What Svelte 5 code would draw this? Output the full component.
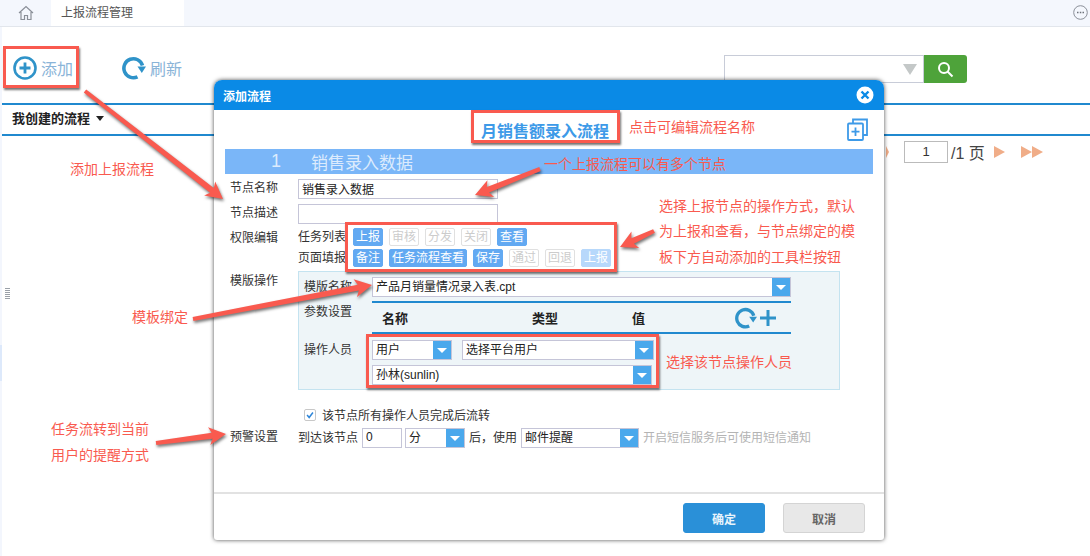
<script>
  const taskButtons = [
    { label: '上报', on: true },
    { label: '审核' },
    { label: '分发' },
    { label: '关闭' },
    { label: '查看', on: true }
  ];
  const pageButtons = [
    { label: '备注', on: true },
    { label: '任务流程查看', on: true },
    { label: '保存', on: true },
    { label: '通过' },
    { label: '回退' },
    { label: '上报', faint: true }
  ];

  // callouts drawn over the screenshot
  const notes = [
    { text: '添加上报流程', x: 70, y: 159 },
    { text: '点击可编辑流程名称', x: 629, y: 117 },
    { text: '一个上报流程可以有多个节点', x: 544, y: 154 },
    { text: '选择上报节点的操作方式，默认', x: 659, y: 196 },
    { text: '为上报和查看，与节点绑定的模', x: 659, y: 221 },
    { text: '板下方自动添加的工具栏按钮', x: 659, y: 247 },
    { text: '模板绑定', x: 132, y: 307 },
    { text: '选择该节点操作人员', x: 666, y: 352 },
    { text: '任务流转到当前', x: 51, y: 419 },
    { text: '用户的提醒方式', x: 51, y: 445 }
  ];
  const boxes = [
    { x: 3, y: 46, w: 76, h: 42 },
    { x: 471, y: 110, w: 149, h: 33 },
    { x: 345, y: 222, w: 272, h: 50 },
    { x: 366, y: 334, w: 293, h: 54 }
  ];
  const arrows = [
    [85, 91, 223, 199],
    [540, 169, 475, 195],
    [654, 231, 620, 247],
    [193, 319, 372, 285],
    [156, 443, 226, 434]
  ];

  function arrowPoints([x1, y1, x2, y2]) {
    const len = Math.hypot(x2 - x1, y2 - y1);
    const ux = (x2 - x1) / len;
    const uy = (y2 - y1) / len;
    const at = (along, side) =>
      `${(x2 - ux * along - uy * side).toFixed(1)},${(y2 - uy * along + ux * side).toFixed(1)}`;
    const tail = `${(x1 - uy * 2).toFixed(1)},${(y1 + ux * 2).toFixed(1)}`;
    const tail2 = `${(x1 + uy * 2).toFixed(1)},${(y1 - ux * 2).toFixed(1)}`;
    return [tail, at(14, 3), at(17, 9), at(0, 0), at(17, -9), at(14, -3), tail2].join(' ');
  }
</script>

{#snippet dropdown(text, width)}
  <div class="dropdown" style="width: {width}px">
    <span class="dropdown-text">{text}</span>
    <span class="dropdown-arrow"></span>
  </div>
{/snippet}

{#snippet refreshIcon(size)}
  <svg width={size} height={size} viewBox="0 0 24 24" fill="none">
    <path d="M15.500 20.800A9.500 9.500 0 1 1 20.500 9.500" stroke="#2f93c9" stroke-width="3.600" />
    <path d="M15.500 10.500h8.500l-4.200 6.500z" fill="#2f93c9" />
  </svg>
{/snippet}

<div class="page">
  <div class="topbar">
    <div class="home">
      <svg width="16" height="16" viewBox="0 0 16 16" fill="none" stroke="#8a8f98" stroke-width="1.2">
        <path d="M1 8l7-6.500L15 8M3 7v7.500h3.500v-4h3v4H13V7" />
      </svg>
    </div>
    <div class="tab">上报流程管理</div>
    <div class="more">
      <svg width="15" height="15" viewBox="0 0 15 15">
        <circle cx="7.500" cy="7.500" r="6.800" fill="none" stroke="#8a8f98" />
        <path d="M4 6.800h1.500v1.400H4zM6.800 6.800h1.500v1.400H6.800zM9.500 6.800H11v1.400H9.500z" fill="#6d727a" />
      </svg>
    </div>
  </div>

  <div class="main">
    <div class="rail"><span class="rail-mark"></span></div>
    <div class="content">
      <div class="toolbar">
        <button class="tool">
          <svg width="24" height="24" viewBox="0 0 24 24" fill="none" stroke="#2f93c9">
            <circle cx="12" cy="12" r="10.500" stroke-width="2.600" />
            <path d="M12 6.500v11M6.500 12h11" stroke-width="2.800" />
          </svg>
          添加
        </button>
        <button class="tool refresh">
          {@render refreshIcon(24)}
          刷新
        </button>
        <div class="search">
          <div class="search-input"><span class="search-tri"></span></div>
          <div class="search-btn">
            <svg width="17" height="17" viewBox="0 0 17 17" fill="none" stroke="#fff" stroke-width="2">
              <circle cx="7" cy="7" r="5" />
              <path d="M10.500 10.500L15.500 15.500" />
            </svg>
          </div>
        </div>
      </div>

      <div class="listhead">我创建的流程 <span class="caret"></span></div>

      <div class="pager">
        <span class="tri prev"></span>
        <div class="pager-input">1</div>
        <span class="pager-text">/1 页</span>
        <span class="tri"></span>
        <span class="double"><span class="tri"></span><span class="tri"></span></span>
      </div>
    </div>
  </div>

  <div class="grip"></div>

  <section class="modal">
    <header class="modal-head">
      <span>添加流程</span>
      <svg width="18" height="18" viewBox="0 0 18 18">
        <circle cx="9" cy="9" r="8.500" fill="#fff" />
        <path d="M5.500 5.500l7 7M12.500 5.500l-7 7" stroke="#0a8ae6" stroke-width="2.400" />
      </svg>
    </header>

    <div class="modal-body">
      <div class="flow-title">
        <span></span>
        <strong>月销售额录入流程</strong>
        <svg width="21" height="23" viewBox="0 0 21 23" fill="none" stroke="#3d9ae8" stroke-width="1.800">
          <path d="M6 5V1.500h14V17h-4" />
          <rect x="1" y="5.500" width="15" height="16.500" rx="1" />
          <path d="M8.500 9.500v8.500M4.500 13.700h8" />
        </svg>
      </div>

      <div class="band"><span class="band-no">1</span><span>销售录入数据</span></div>

      <div class="form">
        <div class="row">
          <label class="label" for="node-name">节点名称</label>
          <input id="node-name" class="text" value="销售录入数据" />
        </div>
        <div class="row">
          <label class="label" for="node-desc">节点描述</label>
          <input id="node-desc" class="text" />
        </div>

        <div class="row perm">
          <span class="label">权限编辑</span>
          <div class="perm-rows">
            <div class="perm-row">
              <span class="perm-name">任务列表</span>
              {#each taskButtons as b}
                <span class="perm-btn" class:on={b.on}>{b.label}</span>
              {/each}
            </div>
            <div class="perm-row">
              <span class="perm-name">页面填报</span>
              {#each pageButtons as b}
                <span class="perm-btn" class:on={b.on} class:faint={b.faint}>{b.label}</span>
              {/each}
            </div>
          </div>
        </div>

        <div class="row tpl">
          <span class="label">模版操作</span>
          <div class="panel">
            <span class="panel-label name-label">模版名称</span>
            {@render dropdown('产品月销量情况录入表.cpt', 419)}

            <span class="panel-label params-label">参数设置</span>
            <div class="params">
              <span class="col-name">名称</span>
              <span class="col-type">类型</span>
              <span class="col-val">值</span>
              <span class="param-icons">
                {@render refreshIcon(22)}
                <svg width="20" height="20" viewBox="0 0 20 20">
                  <path d="M10 2v16M2 10h16" stroke="#2f93c9" stroke-width="3" />
                </svg>
              </span>
            </div>

            <span class="panel-label users-label">操作人员</span>
            <div class="users">
              <div class="user-row">
                {@render dropdown('用户', 80)}
                {@render dropdown('选择平台用户', 192)}
              </div>
              {@render dropdown('孙林(sunlin)', 280)}
            </div>
          </div>
        </div>

        <div class="row check-row">
          <span class="label"></span>
          <span class="check">
            <svg width="12" height="12" viewBox="0 0 12 12" fill="none">
              <path d="M2.500 6l2.500 3 4.500-6" stroke="#2f86d8" stroke-width="1.800" />
            </svg>
          </span>
          <span>该节点所有操作人员完成后流转</span>
        </div>

        <div class="row warn">
          <span class="label">预警设置</span>
          <span class="warn-text">到达该节点</span>
          <input class="text num" value="0" />
          {@render dropdown('分', 60)}
          <span class="warn-after">后，使用</span>
          {@render dropdown('邮件提醒', 118)}
          <span class="hint">开启短信服务后可使用短信通知</span>
        </div>
      </div>
    </div>

    <footer class="modal-foot">
      <button class="ok">确定</button>
      <button class="cancel">取消</button>
    </footer>
  </section>

  {#each boxes as b}
    <div class="redbox" style="left: {b.x}px; top: {b.y}px; width: {b.w}px; height: {b.h}px"></div>
  {/each}

  <svg class="arrows" width="1090" height="556">
    {#each arrows as a}
      <polygon points={arrowPoints(a)} />
    {/each}
  </svg>

  {#each notes as n}
    <span class="note" style="left: {n.x}px; top: {n.y}px">{n.text}</span>
  {/each}
</div>

<style>
  :global(body) {
    margin: 0;
    background: #fff;
  }

  .page {
    position: relative;
    width: 1090px;
    height: 556px;
    overflow: hidden;
    background: #fff;
    color: #333;
    font-family: "Liberation Sans", "Noto Sans CJK SC", sans-serif;
    font-size: 12px;
  }

  button {
    font-family: inherit;
    cursor: pointer;
  }

  .topbar {
    display: flex;
    align-items: stretch;
    height: 27px;
    background: #f4f7fd;
    border-bottom: 1px solid #e2e6ec;
    box-sizing: border-box;
  }

  .home {
    display: flex;
    width: 51px;
    align-items: center;
    justify-content: center;
  }

  .tab {
    width: 123px;
    padding-left: 10px;
    background: #fff;
    line-height: 27px;
    color: #555;
  }

  .more {
    margin-left: auto;
    padding: 5px 2px 0 0;
  }

  .main {
    display: flex;
    height: 529px;
  }

  .rail {
    position: relative;
    width: 2px;
    background: #f3f6fd;
  }

  .rail-mark {
    display: block;
    height: 36px;
    margin-top: 318px;
    background: #dde9fb;
  }

  .content {
    flex: 1;
  }

  .toolbar {
    display: flex;
    align-items: center;
    box-sizing: border-box;
    height: 76px;
    padding: 12px 123px 4px 11px;
  }

  .tool {
    display: flex;
    align-items: center;
    gap: 4px;
    margin-top: -2px;
    padding: 0;
    border: none;
    background: none;
    font-size: 16px;
    color: #8ab4d8;
  }

  .refresh {
    margin-left: 49px;
  }

  .search {
    display: flex;
    margin-left: auto;
    height: 28px;
  }

  .search-input {
    display: flex;
    align-items: center;
    justify-content: flex-end;
    box-sizing: border-box;
    width: 200px;
    padding-right: 6px;
    border: 1px solid #c8ccd8;
  }

  .search-tri {
    width: 0;
    height: 0;
    border-style: solid;
    border-width: 11px 7px 0;
    border-color: #c4c8c8 transparent transparent;
  }

  .search-btn {
    display: flex;
    width: 43px;
    align-items: center;
    justify-content: center;
    border-radius: 0 3px 3px 0;
    background: #4ea33a;
  }

  .listhead {
    box-sizing: border-box;
    height: 33px;
    padding-left: 10px;
    border-top: 2px solid #2089cf;
    border-bottom: 2px solid #2089cf;
    font-size: 13px;
    font-weight: 700;
    line-height: 28px;
    color: #222;
  }

  .caret {
    display: inline-block;
    margin-left: 2px;
    vertical-align: 2px;
    border-style: solid;
    border-width: 5px 4px 0;
    border-color: #222 transparent transparent;
  }

  .pager {
    display: flex;
    align-items: center;
    height: 22px;
    margin-top: 5px;
    padding-left: 884px;
  }

  .tri {
    width: 0;
    height: 0;
    border-style: solid;
    border-width: 6.500px 0 6.500px 11px;
    border-color: transparent transparent transparent #f0ad88;
  }

  .prev {
    margin-right: 15px;
    border-width: 6.500px 0 6.500px 3px;
  }

  .pager-input {
    box-sizing: border-box;
    width: 44px;
    height: 22px;
    border: 1px solid #bbb;
    font-size: 13px;
    line-height: 20px;
    text-align: center;
  }

  .pager-text {
    margin: 0 9px 0 3px;
    font-size: 16px;
    color: #444;
    white-space: nowrap;
  }

  .double {
    display: flex;
    margin-left: 16px;
  }

  .grip {
    position: absolute;
    left: 5px;
    top: 288px;
    width: 5px;
    height: 12px;
    background: repeating-linear-gradient(to bottom, #9aa0a8 0 1px, #fff 1px 2px);
  }

  .modal {
    position: absolute;
    left: 214px;
    top: 80px;
    display: flex;
    flex-direction: column;
    width: 670px;
    height: 460px;
    border-radius: 8px 8px 3px 3px;
    background: #fff;
    box-shadow: 0 0 4px rgba(0, 0, 0, 0.7);
  }

  .modal-head {
    display: flex;
    align-items: center;
    justify-content: space-between;
    height: 30px;
    padding: 0 10px 0 9px;
    border-radius: 8px 8px 0 0;
    background: #0a8ae6;
    font-weight: 700;
    color: #fff;
  }

  .modal-body {
    flex: 1;
  }

  .flow-title {
    display: grid;
    grid-template-columns: 1fr auto 1fr;
    align-items: center;
    height: 39px;
    padding: 0 16px 0 8px;
    color: #3d9ae8;
    font-size: 16px;
  }

  .flow-title svg {
    justify-self: end;
  }

  .band {
    display: flex;
    align-items: center;
    gap: 30px;
    height: 25px;
    margin: 0 11px;
    padding-left: 46px;
    background: #7ab6f8;
    font-size: 17px;
    color: #dcebfd;
  }

  .band-no {
    font-size: 18px;
  }

  .form {
    padding: 5px 0 0 16px;
  }

  .row {
    display: flex;
    align-items: center;
    min-height: 20px;
    margin-bottom: 5px;
  }

  .label {
    flex: none;
    width: 68px;
    margin-top: -6px;
    color: #333;
  }

  .text {
    box-sizing: border-box;
    width: 200px;
    height: 20px;
    padding: 0 3px 2px;
    border: 1px solid #c5c5d8;
    font: inherit;
    color: #222;
  }

  .perm {
    align-items: flex-start;
    margin: -1px 0 0;
  }

  .perm .label,
  .tpl .label {
    margin-top: 0;
  }

  .perm-rows {
    display: flex;
    flex-direction: column;
    gap: 3px;
  }

  .perm-row {
    display: flex;
    gap: 6px;
  }

  .perm-name {
    width: 49px;
    line-height: 18px;
    white-space: nowrap;
  }

  .perm-btn {
    box-sizing: border-box;
    height: 18px;
    padding: 0 2px;
    border: 1px solid #e0e0e0;
    border-radius: 2px;
    line-height: 16px;
    color: #ccc;
  }

  .perm-btn.on {
    border-color: #62a9f2;
    background: #62a9f2;
    color: #fff;
  }

  .perm-btn.faint {
    border-color: #b7d8fb;
    background: #b7d8fb;
    color: #fff;
  }

  .tpl {
    align-items: flex-start;
    margin: 4px 0 16px;
  }

  .panel {
    display: grid;
    grid-template-columns: 68px 419px;
    align-items: start;
    align-content: start;
    box-sizing: border-box;
    width: 542px;
    height: 119px;
    padding: 5px 0 0 5px;
    border: 1px solid #c4e3f0;
    background: #eef5f8;
  }

  .panel-label {
    color: #333;
  }

  .params-label {
    padding-top: 5px;
  }

  .users-label {
    padding-top: 6px;
  }

  .params {
    position: relative;
    display: flex;
    align-items: center;
    box-sizing: border-box;
    height: 33px;
    margin-top: 4px;
    border-top: 2px solid #2089cf;
    border-bottom: 2px solid #2089cf;
    font-size: 13px;
    font-weight: 700;
    color: #222;
  }

  .col-name {
    width: 160px;
    padding-left: 10px;
    box-sizing: border-box;
  }

  .col-type {
    width: 100px;
  }

  .param-icons {
    display: flex;
    align-items: center;
    gap: 1px;
    margin-left: auto;
    padding-right: 13px;
  }

  .users {
    display: flex;
    flex-direction: column;
    gap: 5px;
    padding-top: 6px;
  }

  .user-row {
    display: flex;
    gap: 10px;
  }

  .dropdown {
    display: flex;
    flex: none;
    box-sizing: border-box;
    height: 20px;
    border: 1px solid #c5c5d8;
    background: #fff;
  }

  .dropdown-text {
    flex: 1;
    padding-left: 3px;
    line-height: 18px;
    color: #222;
    white-space: nowrap;
    overflow: hidden;
  }

  .dropdown-arrow {
    position: relative;
    flex: none;
    width: 18px;
    background: #4aa8ec;
  }

  .dropdown-arrow::after {
    content: "";
    position: absolute;
    left: 4px;
    top: 7px;
    border-style: solid;
    border-width: 5px 5px 0;
    border-color: #fff transparent transparent;
  }

  .check-row {
    margin-bottom: 5px;
    min-height: 15px;
  }

  .check {
    display: flex;
    box-sizing: border-box;
    width: 12px;
    height: 12px;
    margin: 0 6px;
    border: 1px solid #c8c8c8;
    border-radius: 2px;
    align-items: center;
    justify-content: center;
    background: #fff;
  }

  .warn-text {
    width: 64px;
    margin-top: -4px;
    white-space: nowrap;
  }

  .num {
    width: 40px;
    margin-right: 3px;
  }

  .warn-after {
    width: 49px;
    margin: -4px 3px 0 4px;
    white-space: nowrap;
  }

  .hint {
    margin: -4px 0 0 4px;
    color: #b4b4b4;
    white-space: nowrap;
  }

  .modal-foot {
    display: flex;
    justify-content: flex-end;
    gap: 18px;
    height: 48px;
    padding: 9px 19px 0 0;
    box-sizing: border-box;
    border-top: 2px solid #e2e2e2;
  }

  .ok,
  .cancel {
    width: 82px;
    height: 30px;
    border-radius: 3px;
    font-size: 12px;
    font-weight: 700;
  }

  .ok {
    border: 1px solid #2a90d8;
    background: #2a90d8;
    color: #e8f4fc;
  }

  .cancel {
    border: 1px solid #d4d4d4;
    background: #e8e8e8;
    color: #666;
  }

  .redbox {
    position: absolute;
    box-sizing: border-box;
    border: 3px solid #f95a4f;
    box-shadow: 1px 2px 2px rgba(0, 0, 0, 0.55);
  }

  .arrows {
    position: absolute;
    left: 0;
    top: 0;
    pointer-events: none;
  }

  .arrows polygon {
    fill: #f95a4f;
    filter: drop-shadow(1px 2px 1.500px rgba(0, 0, 0, 0.55));
  }

  .note {
    position: absolute;
    font-size: 14px;
    line-height: 20px;
    color: #f95a4f;
    white-space: nowrap;
  }
</style>
